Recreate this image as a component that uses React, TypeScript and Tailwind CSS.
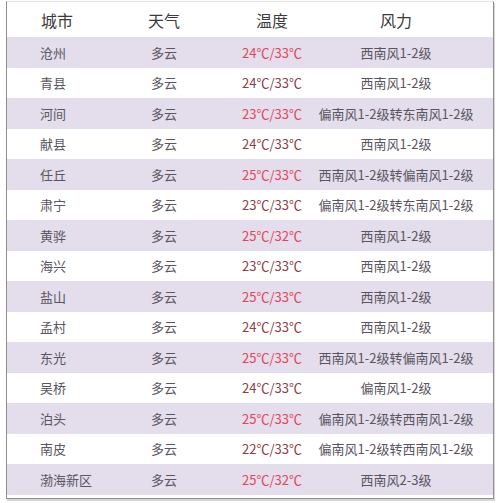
import React from "react";

const rows: [string, string, string, string][] = [
  ["沧州", "多云", "24℃/33℃", "西南风1-2级"],
  ["青县", "多云", "24℃/33℃", "西南风1-2级"],
  ["河间", "多云", "23℃/33℃", "偏南风1-2级转东南风1-2级"],
  ["献县", "多云", "24℃/33℃", "西南风1-2级"],
  ["任丘", "多云", "25℃/33℃", "西南风1-2级转偏南风1-2级"],
  ["肃宁", "多云", "23℃/33℃", "偏南风1-2级转东南风1-2级"],
  ["黄骅", "多云", "25℃/32℃", "西南风1-2级"],
  ["海兴", "多云", "23℃/33℃", "西南风1-2级"],
  ["盐山", "多云", "25℃/33℃", "西南风1-2级"],
  ["孟村", "多云", "24℃/33℃", "西南风1-2级"],
  ["东光", "多云", "25℃/33℃", "西南风1-2级转偏南风1-2级"],
  ["吴桥", "多云", "24℃/33℃", "偏南风1-2级"],
  ["泊头", "多云", "25℃/33℃", "偏南风1-2级转西南风1-2级"],
  ["南皮", "多云", "22℃/33℃", "偏南风1-2级转西南风1-2级"],
  ["渤海新区", "多云", "25℃/32℃", "西南风2-3级"],
];

const cols = "grid grid-cols-[103px_108px_108px_140px_1fr]";

export default function App() {
  return (
    <div
      className="w-[500px] h-[503px] bg-white pt-[1px]"
      style={{ fontFamily: '"Noto Sans CJK SC", "Noto Sans", sans-serif' }}
    >
      <div className="ml-[6px] w-[488px] border-x border-b border-t border-[#8e8e8e] border-t-[#e4e4e4] shadow-[1px_2px_0_#d6d6d6] pb-[3px]">
        {/* header */}
        <div className={`${cols} h-[35px] items-center text-[16px] text-[#3b3b3b]`}>
          <div className="pl-[34px]">城市</div>
          <div className="flex justify-center">天气</div>
          <div className="flex justify-center">温度</div>
          <div className="flex justify-center whitespace-nowrap">风力</div>
          <div />
        </div>

        {rows.map(([city, weather, temp, wind], i) => {
          const shaded = i % 2 === 0;
          return (
            <div
              key={city}
              className={`${cols} h-[30.5px] items-center text-[13px] text-[#5a5560] ${
                shaded ? "bg-[#e3ddec]" : "bg-white"
              }`}
            >
              <div className="pl-[33px] whitespace-nowrap">{city}</div>
              <div className="flex justify-center">{weather}</div>
              <div
                className={`flex justify-center whitespace-nowrap ${
                  shaded ? "text-[#e2465a]" : "text-[#8c4048]"
                }`}
              >
                {temp}
              </div>
              <div className="flex justify-center whitespace-nowrap">{wind}</div>
              <div />
            </div>
          );
        })}
      </div>
    </div>
  );
}
